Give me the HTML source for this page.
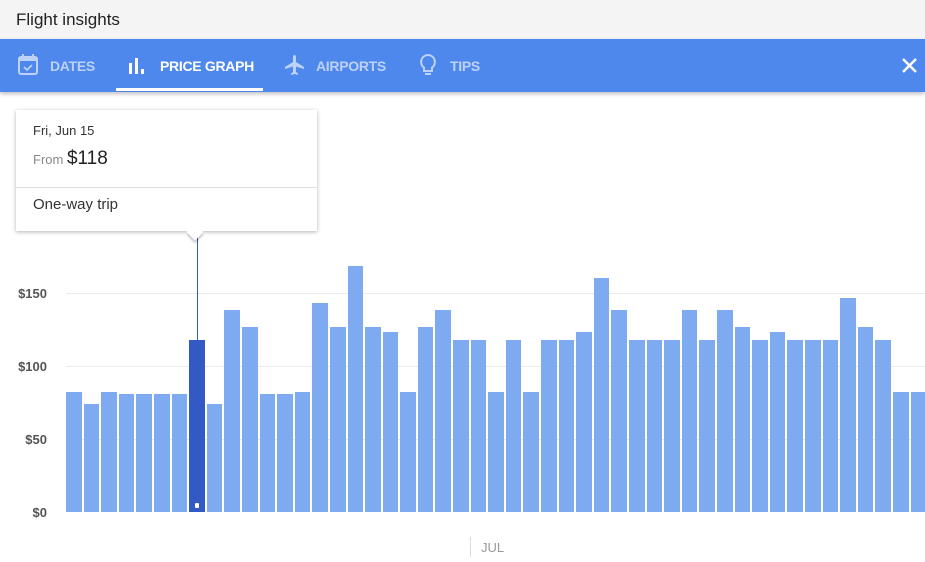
<!DOCTYPE html>
<html><head><meta charset="utf-8"><style>
*{margin:0;padding:0;box-sizing:border-box}
body{width:925px;height:562px;overflow:hidden;background:#fff;font-family:"Liberation Sans",Arial,sans-serif;position:relative}
.top{position:absolute;left:0;top:0;width:925px;height:39px;background:#f4f4f4}
.top span{position:absolute;left:16px;top:10px;font-size:17px;color:#222}
.nav{position:absolute;left:0;top:39px;width:925px;height:53px;background:#4f88ec;box-shadow:0 2px 4px rgba(0,0,0,.25)}
.tab{position:absolute;top:19px;font-size:14px;font-weight:bold;color:#bcd2f8;letter-spacing:-.3px}
.tab.on{color:#fff}
.ul{position:absolute;left:116px;top:49px;width:147px;height:3px;background:#fff}
.ico{position:absolute}
.grid{position:absolute;left:66px;width:859px;height:1px;background:#ebebeb}
.yl{position:absolute;right:878px;font-size:13px;font-weight:bold;color:#555;text-align:right}
.bars{position:absolute;left:66px;top:200px;height:312px;width:900px;display:flex;align-items:flex-end;gap:2px}
.bars div{width:15.6px;flex:none;background:#7eaaf2}
.bars div.s{background:#3359c4;position:relative}
.tip{position:absolute;left:16px;top:110px;width:301px;height:121px;background:#fff;box-shadow:0 1px 4px rgba(0,0,0,.3)}
</style></head><body>
<div class="top"><span>Flight insights</span></div>
<div class="grid" style="top:293px"></div>
<div class="grid" style="top:366px"></div>
<div class="grid" style="top:439px"></div>
<div class="yl" style="top:286px">$150</div>
<div class="yl" style="top:359px">$100</div>
<div class="yl" style="top:432px">$50</div>
<div class="yl" style="top:505px">$0</div>
<div class="bars">
<div style="height:120px"></div><div style="height:108px"></div><div style="height:120px"></div><div style="height:118px"></div><div style="height:118px"></div><div style="height:118px"></div><div style="height:118px"></div><div class="s" style="height:172px"><i style="position:absolute;left:6px;bottom:4px;width:4px;height:5px;background:#fff;border-radius:1px"></i></div><div style="height:108px"></div><div style="height:202px"></div>
<div style="height:185px"></div><div style="height:118px"></div><div style="height:118px"></div><div style="height:120px"></div><div style="height:209px"></div><div style="height:185px"></div><div style="height:246px"></div><div style="height:185px"></div><div style="height:180px"></div><div style="height:120px"></div>
<div style="height:185px"></div><div style="height:202px"></div><div style="height:172px"></div><div style="height:172px"></div><div style="height:120px"></div><div style="height:172px"></div><div style="height:120px"></div><div style="height:172px"></div><div style="height:172px"></div><div style="height:180px"></div>
<div style="height:234px"></div><div style="height:202px"></div><div style="height:172px"></div><div style="height:172px"></div><div style="height:172px"></div><div style="height:202px"></div><div style="height:172px"></div><div style="height:202px"></div><div style="height:185px"></div><div style="height:172px"></div>
<div style="height:180px"></div><div style="height:172px"></div><div style="height:172px"></div><div style="height:172px"></div><div style="height:214px"></div><div style="height:185px"></div><div style="height:172px"></div><div style="height:120px"></div><div style="height:120px"></div>
</div>
<div style="position:absolute;left:197px;top:236px;width:1px;height:104px;background:#3359c4"></div>
<div style="position:absolute;left:470px;top:537px;width:1px;height:20px;background:#ddd"></div>
<div style="position:absolute;left:481px;top:540px;font-size:13px;color:#999">JUL</div>
<div class="tip">
<div style="position:absolute;left:17px;top:13px;font-size:13px;color:#333">Fri, Jun 15</div>
<div style="position:absolute;left:17px;top:38px;font-size:13px;color:#888">From <span style="font-size:19px;color:#222">$118</span></div>
<div style="position:absolute;left:0;top:77px;width:301px;height:1px;background:#ddd"></div>
<div style="position:absolute;left:17px;top:86px;font-size:15px;color:#333">One-way trip</div>
</div>
<div style="position:absolute;left:189px;top:226px;width:12px;height:12px;background:#fff;transform:rotate(45deg);box-shadow:2px 2px 2px rgba(0,0,0,.2)"></div>
<div class="nav">
<svg class="ico" style="left:17px;top:14px" width="22" height="24" viewBox="0 0 22 24"><rect x="2" y="4" width="18" height="17" rx="2" fill="none" stroke="#bcd2f8" stroke-width="2"/><rect x="2" y="4" width="18" height="4" fill="#bcd2f8"/><rect x="5" y="1" width="2" height="4" fill="#bcd2f8"/><rect x="15" y="1" width="2" height="4" fill="#bcd2f8"/><path d="M7 14l3 3 5-5" fill="none" stroke="#bcd2f8" stroke-width="1.8"/></svg>
<div class="tab" style="left:50px">DATES</div>
<svg class="ico" style="left:128px;top:17px" width="20" height="20" viewBox="0 0 20 20"><rect x="1" y="7" width="3" height="11" fill="#fff"/><rect x="7" y="2" width="3" height="16" fill="#fff"/><rect x="13" y="13" width="3" height="5" fill="#fff"/></svg>
<div class="tab on" style="left:160px">PRICE GRAPH</div>
<svg class="ico" style="left:282px;top:14px" width="24" height="24" viewBox="0 0 24 24"><path d="M21 16v-2l-8-5V3.5C13 2.7 12.3 2 11.5 2S10 2.7 10 3.5V9l-8 5v2l8-2.5V19l-2 1.5V22l3.5-1 3.5 1v-1.5L13 19v-5.5l8 2.5z" fill="#bcd2f8" transform="translate(1,0)"/></svg>
<div class="tab" style="left:316px">AIRPORTS</div>
<svg class="ico" style="left:417px;top:14px" width="22" height="26" viewBox="0 0 22 26"><path d="M11 2a7 7 0 0 0-4 12.7V18h8v-3.3A7 7 0 0 0 11 2z" fill="none" stroke="#bcd2f8" stroke-width="2"/><rect x="8" y="20" width="6" height="2" fill="#bcd2f8"/></svg>
<div class="tab" style="left:450px">TIPS</div>
<svg class="ico" style="left:901px;top:18px" width="17" height="17" viewBox="0 0 17 17"><path d="M2 2l13 13M15 2L2 15" stroke="#fff" stroke-width="2.4"/></svg>
<div class="ul"></div>
</div>
</body></html>
